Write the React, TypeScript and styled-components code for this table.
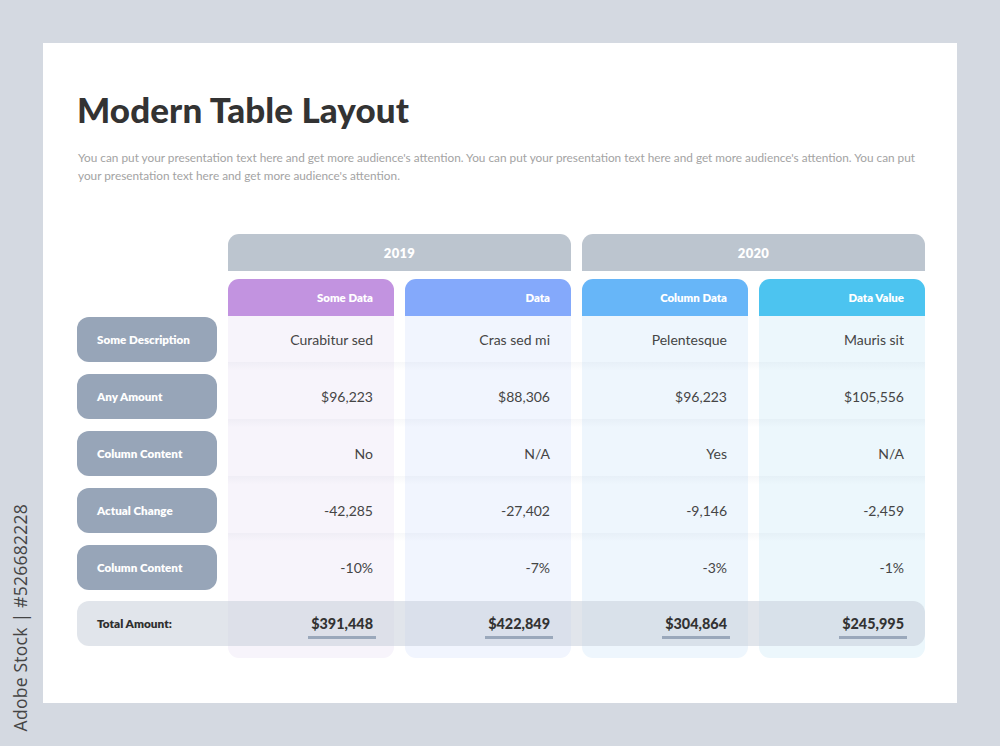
import React from "react";
import styled, { createGlobalStyle } from "styled-components";

const GlobalStyle = createGlobalStyle`
  html, body {
    margin: 0;
    padding: 0;
    background: #d4d9e1;
  }
  body {
    font-family: "Lato", "Open Sans", sans-serif;
  }
`;

const Page = styled.div`
  position: relative;
  width: 1000px;
  height: 746px;
  padding: 43px;
  box-sizing: border-box;
`;

const Stamp = styled.div`
  position: absolute;
  left: 8px;
  bottom: 15px;
  writing-mode: vertical-rl;
  transform: rotate(180deg);
  font-family: "Open Sans", sans-serif;
  font-size: 17.6px;
  color: #454545;
  letter-spacing: 0.2px;
`;

const Sheet = styled.div`
  width: 914px;
  height: 660px;
  background: #ffffff;
  box-sizing: border-box;
  padding: 46px 32px 0 34px;
`;

const Title = styled.h1`
  margin: 0 0 0 0;
  font-size: 35px;
  line-height: 40px;
  font-weight: 900;
  color: #333333;
  letter-spacing: 0.1px;
`;

const Intro = styled.p`
  margin: 20px 0 0 1px;
  width: 850px;
  font-size: 11.8px;
  line-height: 18px;
  color: #a3a3a3;
`;

const Table = styled.div`
  display: grid;
  margin-top: 49px;
  grid-template-columns: 140px repeat(4, 166px);
  column-gap: 11px;
  grid-template-rows: 37px 8px 37px 1px 45px 12px 45px 12px 45px 12px 45px 12px 45px 11px 45px 12px;
`;

const YearHead = styled.div<{ $col: number }>`
  grid-row: 1;
  grid-column: ${(p) => p.$col} / span 2;
  background: #bcc5cf;
  border-radius: 11px 11px 0 0;
  color: #ffffff;
  font-weight: 800;
  font-size: 13px;
  display: flex;
  align-items: center;
  justify-content: center;
  letter-spacing: 0.3px;
`;

const ColHead = styled.div<{ $col: number; $color: string }>`
  grid-row: 3;
  grid-column: ${(p) => p.$col};
  background: ${(p) => p.$color};
  border-radius: 11px 11px 0 0;
  color: #ffffff;
  font-weight: 800;
  font-size: 11.4px;
  display: flex;
  align-items: center;
  justify-content: flex-end;
  padding-right: 21px;
`;

const ColBody = styled.div<{ $col: number; $tint: string }>`
  grid-row: 4 / -1;
  grid-column: ${(p) => p.$col};
  background: ${(p) => p.$tint};
  border-radius: 0 0 11px 11px;
`;

const RowShade = styled.div<{ $row: number }>`
  grid-row: ${(p) => p.$row};
  grid-column: 2 / -1;
  background: linear-gradient(
    to bottom,
    rgba(120, 135, 160, 0.06),
    rgba(120, 135, 160, 0) 70%
  );
`;

const Label = styled.div<{ $row: number }>`
  grid-row: ${(p) => p.$row};
  grid-column: 1;
  background: #97a5b8;
  border-radius: 12px;
  color: #ffffff;
  font-weight: 800;
  font-size: 11.6px;
  display: flex;
  align-items: center;
  padding-left: 20px;
`;

const Cell = styled.div<{ $row: number; $col: number }>`
  grid-row: ${(p) => p.$row};
  grid-column: ${(p) => p.$col};
  display: flex;
  align-items: center;
  justify-content: flex-end;
  padding-right: 21px;
  font-size: 14px;
  color: #454545;
`;

const TotalBar = styled.div<{ $row: number }>`
  grid-row: ${(p) => p.$row};
  grid-column: 1 / -1;
  background: rgba(196, 204, 216, 0.5);
  border-radius: 12px;
`;

const TotalLabel = styled.div<{ $row: number }>`
  grid-row: ${(p) => p.$row};
  grid-column: 1;
  display: flex;
  align-items: center;
  padding-left: 20px;
  font-size: 11.8px;
  font-weight: 800;
  color: #2f2f2f;
`;

const TotalCell = styled(Cell)`
  padding-right: 18px;
`;

const TotalValue = styled.span`
  font-size: 14.4px;
  font-weight: 900;
  color: #333333;
  padding: 3px 3px 4px;
  border-bottom: 3px solid #9aa8bb;
  margin-top: 4px;
`;

const years = [
  { label: "2019", col: 2 },
  { label: "2020", col: 4 },
];

const columns = [
  { title: "Some Data", color: "#c293e0", tint: "#f7f4fb" },
  { title: "Data", color: "#84a9fb", tint: "#f1f5fe" },
  { title: "Column Data", color: "#67b6f8", tint: "#eef6fd" },
  { title: "Data Value", color: "#4cc4f0", tint: "#ecf7fc" },
];

const rows = [
  { label: "Some Description", values: ["Curabitur sed", "Cras sed mi", "Pelentesque", "Mauris sit"] },
  { label: "Any Amount", values: ["$96,223", "$88,306", "$96,223", "$105,556"] },
  { label: "Column Content", values: ["No", "N/A", "Yes", "N/A"] },
  { label: "Actual Change", values: ["-42,285", "-27,402", "-9,146", "-2,459"] },
  { label: "Column Content", values: ["-10%", "-7%", "-3%", "-1%"] },
];

const totals = ["$391,448", "$422,849", "$304,864", "$245,995"];

const App = () => {
  const totalRow = 5 + rows.length * 2;

  return (
    <>
      <GlobalStyle />
      <Page>
        <Sheet>
          <Title>Modern Table Layout</Title>
          <Intro>
            You can put your presentation text here and get more audience's
            attention. You can put your presentation text here and get more
            audience's attention. You can put your presentation text here and
            get more audience's attention.
          </Intro>
          <Table>
            {years.map((y) => (
              <YearHead key={y.label} $col={y.col}>
                {y.label}
              </YearHead>
            ))}
            {columns.map((c, i) => (
              <ColHead key={c.title} $col={i + 2} $color={c.color}>
                {c.title}
              </ColHead>
            ))}
            {columns.map((c, i) => (
              <ColBody key={c.title + "-body"} $col={i + 2} $tint={c.tint} />
            ))}
            {rows.map((r, i) =>
              i > 0 ? <RowShade key={"shade" + i} $row={4 + i * 2} /> : null
            )}
            {rows.map((r, i) => (
              <React.Fragment key={r.label + i}>
                <Label $row={5 + i * 2}>{r.label}</Label>
                {r.values.map((v, j) => (
                  <Cell key={j} $row={5 + i * 2} $col={j + 2}>
                    {v}
                  </Cell>
                ))}
              </React.Fragment>
            ))}
            <TotalBar $row={totalRow} />
            <TotalLabel $row={totalRow}>Total Amount:</TotalLabel>
            {totals.map((t, j) => (
              <TotalCell key={t} $row={totalRow} $col={j + 2}>
                <TotalValue>{t}</TotalValue>
              </TotalCell>
            ))}
          </Table>
        </Sheet>
        <Stamp>Adobe Stock | #526682228</Stamp>
      </Page>
    </>
  );
};

export default App;
